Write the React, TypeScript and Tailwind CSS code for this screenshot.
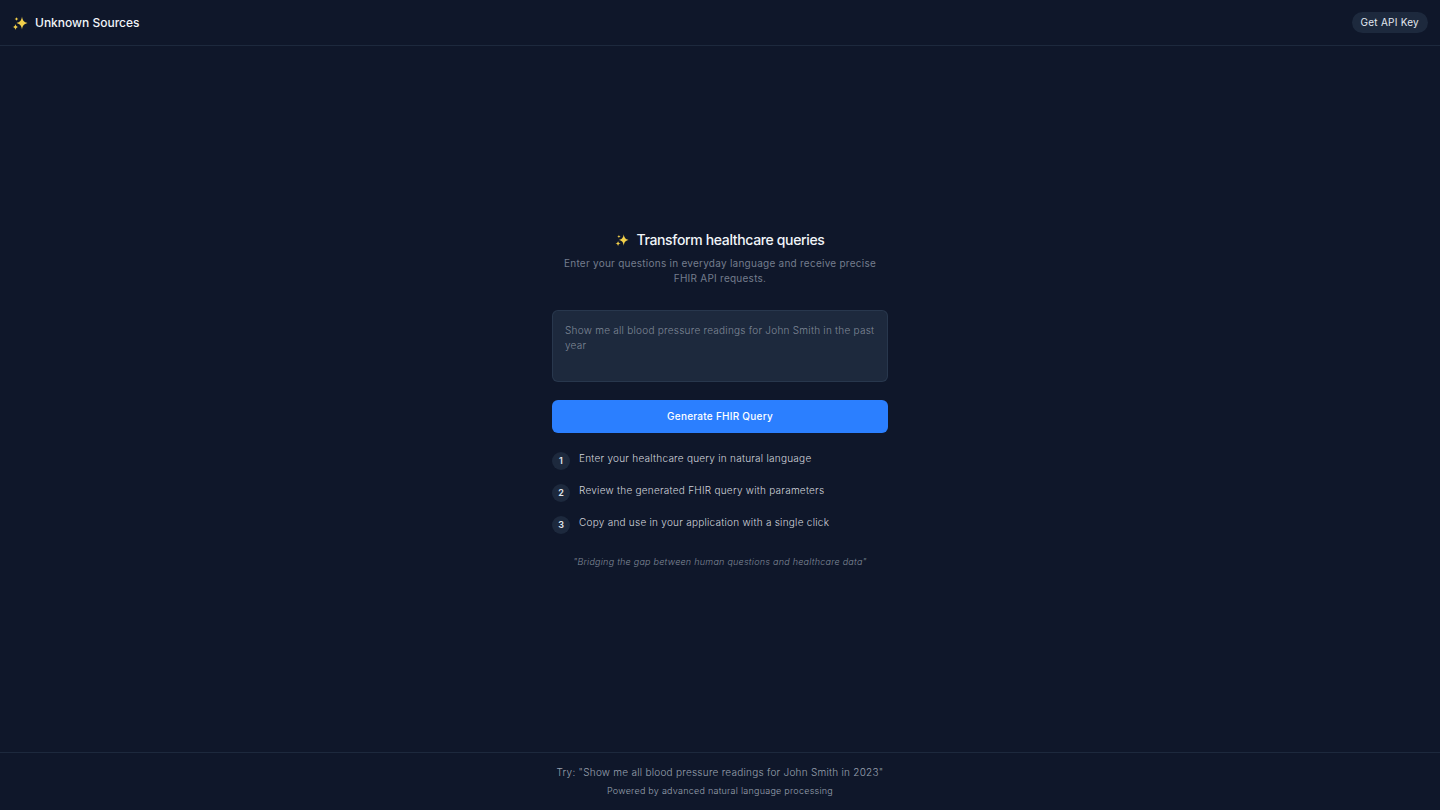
import { useState } from "react";

const steps = [
  "Enter your healthcare query in natural language",
  "Review the generated FHIR query with parameters",
  "Copy and use in your application with a single click",
];

function Sparkles({ className }: { className: string }) {
  return (
    <svg viewBox="0 0 32 32" className={className} aria-hidden="true">
      <path
        fill="#f2cf4a"
        d="M20 3c1.200 8 3.500 11 11 13c-7.500 2-9.800 5-11 13c-1.200-8-3.500-11-11-13c7.500-2 9.800-5 11-13z"
      />
      <path fill="#f2cf4a" d="M7 18c.7 4 2 5.300 6 6c-4 .7-5.300 2-6 6c-.7-4-2-5.300-6-6c4-.7 5.300-2 6-6z" />
      <path fill="#f2cf4a" d="M9 4c.4 2.400 1.400 3.400 4 4c-2.600.6-3.600 1.600-4 4c-.4-2.400-1.400-3.400-4-4c2.600-.6 3.600-1.600 4-4z" />
    </svg>
  );
}

export default function App() {
  const [query, setQuery] = useState("");

  return (
    <div className="flex min-h-screen flex-col bg-[#0f172a] font-['Inter',sans-serif] text-[10px] leading-[15px] tracking-wide text-slate-100">
      <header className="flex items-center justify-between border-b border-slate-800 p-3">
        <div className="flex items-center gap-[7px]">
          <Sparkles className="size-4" />
          <h1 className="text-xs font-medium tracking-normal">Unknown Sources</h1>
        </div>
        <button type="button" className="rounded-full bg-slate-800 px-[9px] py-[3px] tracking-wide text-slate-200">
          Get API Key
        </button>
      </header>

      <main className="flex flex-1 flex-col items-center justify-center px-3">
        <div className="w-full max-w-[336px]">
          <section className="text-center">
            <h2 className="flex items-center justify-center gap-[7px] text-sm leading-5 font-medium tracking-tight">
              <Sparkles className="size-3.5" />
              Transform healthcare queries
            </h2>
            <p className="mt-1.5 text-[#747d8d]">
              Enter your questions in everyday language and receive precise FHIR API requests.
            </p>
          </section>

          <form className="mt-6 flex flex-col gap-[18px]" onSubmit={(e) => e.preventDefault()}>
            <textarea
              aria-label="Healthcare query"
              value={query}
              onChange={(e) => setQuery(e.target.value)}
              placeholder="Show me all blood pressure readings for John Smith in the past year"
              className="h-[72px] resize-none rounded-md border border-slate-700/60 bg-slate-800 p-3 font-light tracking-wide placeholder:text-[#7f8897]"
            />
            <button type="submit" className="rounded-md bg-[#2b7fff] py-[9px] font-medium tracking-wide text-white">
              Generate FHIR Query
            </button>
          </form>

          <ol className="mt-[18px] space-y-[13px]">
            {steps.map((step, index) => (
              <li key={step} className="flex items-start gap-[9px] font-light text-gray-300">
                <span className="mt-px flex size-[18px] shrink-0 items-center justify-center rounded-full bg-slate-800 text-[9px] font-semibold tracking-normal text-slate-200">
                  {index + 1}
                </span>
                {step}
              </li>
            ))}
          </ol>

          <p className="mt-[21px] text-center text-[9px] leading-[14px] font-light text-[#7f8897] italic">
            "Bridging the gap between human questions and healthcare data"
          </p>
        </div>
      </main>

      <footer className="border-t border-slate-800 p-3 text-center font-light text-gray-400">
        <p>Try: "Show me all blood pressure readings for John Smith in 2023"</p>
        <p className="mt-1 text-[9px] leading-[14px]">Powered by advanced natural language processing</p>
      </footer>
    </div>
  );
}
